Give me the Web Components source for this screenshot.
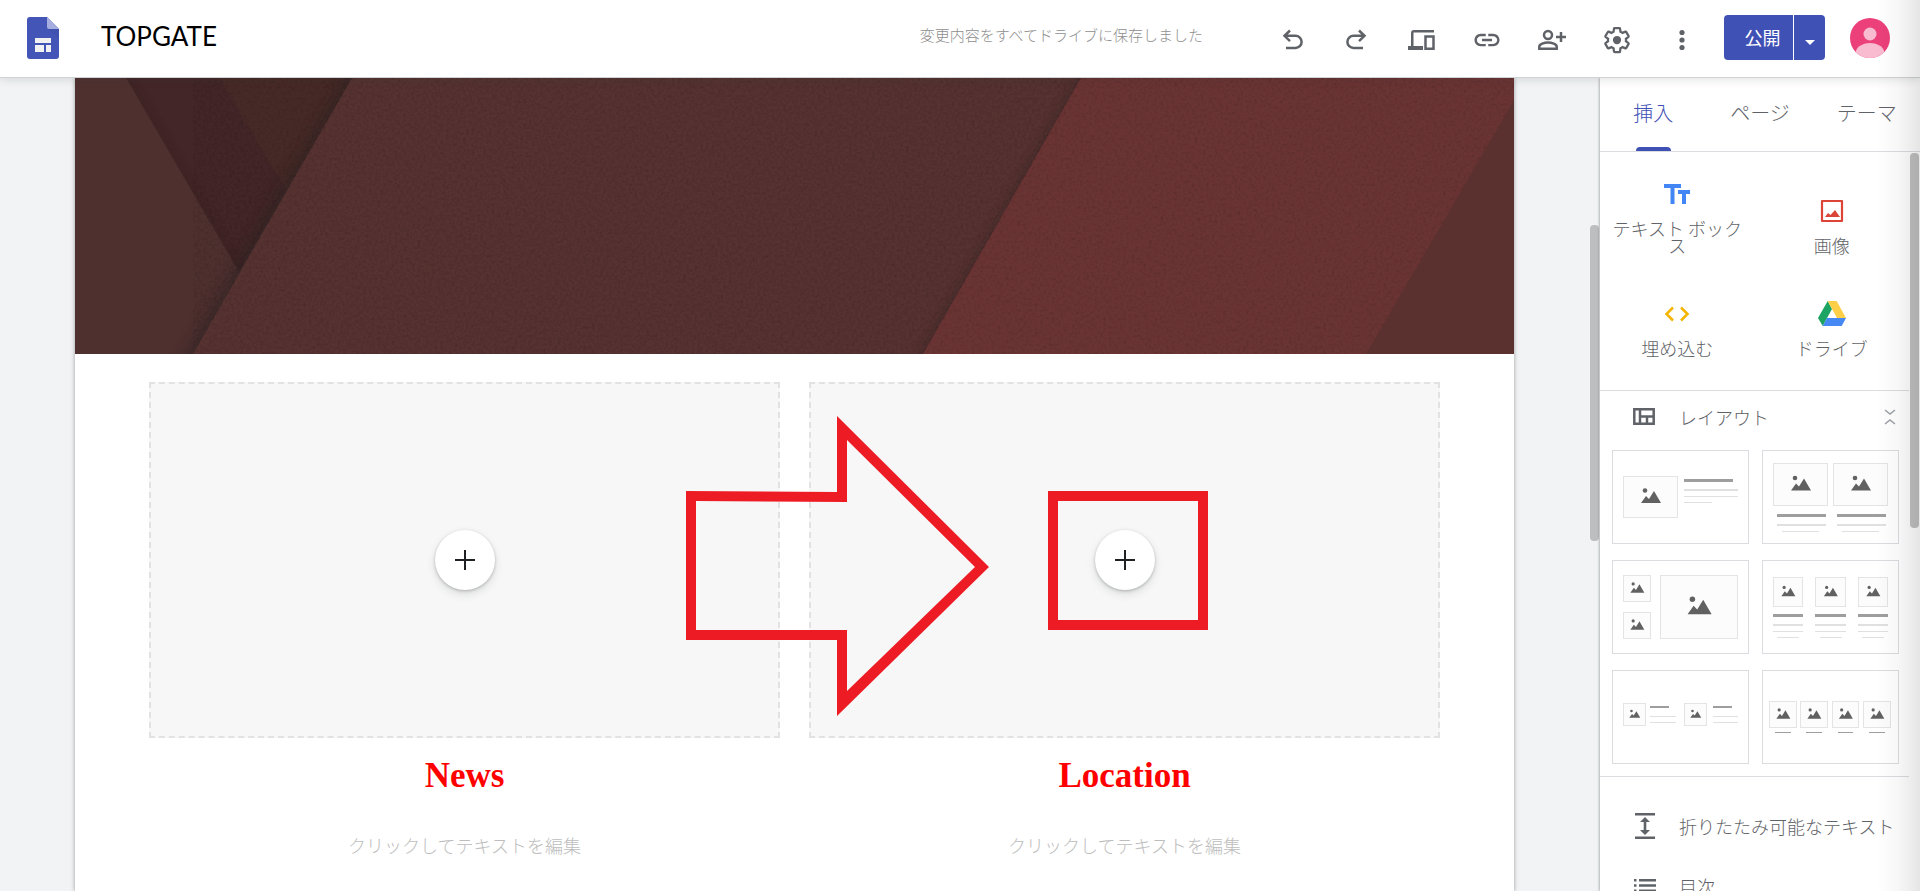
<!DOCTYPE html>
<html lang="ja">
<head>
<meta charset="utf-8">
<title>TOPGATE</title>
<style>
    body {
        margin: 0;
        height: 100vh;
        overflow: hidden;
        font-family: "Noto Sans CJK JP", sans-serif;
        font-weight: 300;
        color: #5f6368;
    }
</style>
</head>
<body>

<template id="site-editor">
    <style>
        :host {
            display: flex;
            flex-direction: column;
            height: 100%;
            position: relative;
        }
        main {
            display: flex;
            flex: 1;
            min-height: 0;
        }
        #edge {
            position: absolute;
            top: 0;
            right: 0;
            bottom: 0;
            width: 44px;
            z-index: 3;
            pointer-events: none;
            background: linear-gradient(to right, rgba(0, 0, 0, 0), rgba(0, 0, 0, .03) 50%, rgba(0, 0, 0, .1));
        }
    </style>
    <slot name="header"></slot>
    <main><slot></slot></main>
    <div id="edge"></div>
</template>

<template id="editor-header">
    <style>
        :host {
            display: block;
            flex: none;
            position: relative;
            z-index: 2;
            background: #fff;
            border-bottom: 1px solid #d0d3d6;
            box-shadow: 0 2px 8px rgba(60, 64, 67, .14);
        }
        header {
            display: flex;
            align-items: center;
            height: 75px;
            padding: 0 30px 2px 27px;
        }
        h1 {
            margin: 0 0 0 42px;
            padding-bottom: 4px;
            font: 400 26px/32px Lato, sans-serif;
            color: #000;
        }
        #status {
            margin-left: auto;
            margin-right: 56px;
            padding-bottom: 6px;
            font-size: 15px;
            line-height: 20px;
            color: #8e8e8e;
        }
        nav {
            display: flex;
            padding-top: 5px;
            margin-right: 10px;
        }
        #publish {
            display: flex;
            gap: 1px;
            margin-right: 25px;
        }
        #publish button {
            height: 45px;
            padding: 0;
            border: 0;
            background: #3f51b5;
            color: #fff;
            font: 400 18px/24px "Noto Sans CJK JP", sans-serif;
        }
        #publish button:first-child {
            width: 69px;
            padding: 0 0 2px 8px;
            border-radius: 4px 0 0 4px;
        }
        #publish button:last-child {
            width: 31px;
            border-radius: 0 4px 4px 0;
        }
        #account {
            padding: 0;
            border: 0;
            background: none;
            display: flex;
        }
    </style>
    <header>
        <svg width="32" height="42" viewBox="0 0 32 42" role="img" aria-label="Sites">
            <path d="M3 0h17l12 12v27a3 3 0 0 1-3 3H3a3 3 0 0 1-3-3V3a3 3 0 0 1 3-3z" fill="#4455b8"/>
            <path d="M20 0l12 12H22a2 2 0 0 1-2-2z" fill="#a5aede"/>
            <path d="M21 12h11v10z" fill="#3b4ba6" opacity=".4"/>
            <path d="M8 21h16v5H8zM8 28h9v7H8zM19 28h5v7h-5z" fill="#f1f1f1"/>
        </svg>
        <h1><slot></slot></h1>
        <span id="status"><slot name="status"></slot></span>
        <nav><slot name="tools"></slot></nav>
        <div id="publish">
            <button type="button"><slot name="publish"></slot></button>
            <button type="button" aria-label="公開オプション">
                <svg width="12" height="6" viewBox="0 0 12 6"><path d="M1 0h10L6 5z" fill="#fff"/></svg>
            </button>
        </div>
        <button id="account" type="button" aria-label="アカウント">
            <svg width="40" height="40" viewBox="0 0 40 40">
                <clipPath id="disc"><circle cx="20" cy="20" r="20"/></clipPath>
                <g clip-path="url(#disc)">
                    <path d="M0 0h40v40H0z" fill="#ec407a"/>
                    <circle cx="20" cy="16" r="6.500" fill="#f8bbd0"/>
                    <path d="M6 33c1-5 8-8 14-8s13 3 14 8v7H6z" fill="#f8bbd0"/>
                </g>
            </svg>
        </button>
    </header>
</template>

<template id="tool-button">
    <style>
        :host { display: block; }
        button {
            display: flex;
            justify-content: center;
            width: 65px;
            padding: 0;
            border: 0;
            background: none;
            color: #5f6368;
        }
    </style>
    <button type="button"><ui-icon></ui-icon></button>
</template>

<template id="editor-canvas">
    <style>
        :host {
            display: flex;
            flex: 1;
            min-width: 0;
            background: #f1f3f4;
        }
        #scroller {
            flex: 1;
            min-width: 0;
            padding: 0 76px 0 75px;
            display: flex;
        }
        article {
            flex: 1;
            min-width: 0;
            background: #fff;
            box-shadow: 0 0 4px rgba(60, 64, 67, .5);
        }
        #columns {
            position: relative;
            display: grid;
            grid-template-columns: 1fr 1fr;
            gap: 29px;
            padding: 28px 74px;
        }
        #track { width: 10px; }
        #thumb {
            height: 316px;
            margin-top: 147px;
            margin-right: 1px;
            border-radius: 4px;
            background: #bdbec0;
        }
    </style>
    <div id="scroller">
        <article>
            <hero-banner></hero-banner>
            <div id="columns"><slot></slot></div>
        </article>
    </div>
    <div id="track"><div id="thumb"></div></div>
</template>

<template id="hero-banner">
    <style>
        :host { display: block; height: 276px; }
        svg { display: block; width: 100%; height: 100%; }
    </style>
    <svg viewBox="0 0 1439 276" preserveAspectRatio="none">
        <defs>
            <filter id="soft" x="-20%" y="-20%" width="140%" height="140%"><feGaussianBlur stdDeviation="7"/></filter>
            <filter id="softer" x="-20%" y="-20%" width="140%" height="140%"><feGaussianBlur stdDeviation="4"/></filter>
            <filter id="paper" x="0" y="0" width="100%" height="100%">
                <feTurbulence type="fractalNoise" baseFrequency=".35" numOctaves="3" seed="4"/>
                <feColorMatrix values="0 0 0 0 0  0 0 0 0 0  0 0 0 0 0  1.5 1.5 0 0 -1.3"/>
            </filter>
            <clipPath id="vee"><path d="M51 0h226L164 194z"/></clipPath>
            <clipPath id="left"><path d="M0 0h277L118 276H0z"/></clipPath>
            <clipPath id="mid"><path d="M277 0h729L848 276H118z"/></clipPath>
        </defs>
        <path d="M0 0h1439v276H0z" fill="#4e302f"/>
        <g clip-path="url(#vee)">
            <path d="M51 0h226L164 194z" fill="#432627"/>
            <path d="M145 0h132l-66 112z" fill="#472a27"/>
            <path d="M51 0l113 194" stroke="#301c1c" stroke-width="6" filter="url(#softer)" opacity=".4"/>
        </g>
        <g clip-path="url(#left)">
            <path d="M290-20L108 296" stroke="#2c2223" stroke-width="14" filter="url(#soft)" opacity=".6"/>
        </g>
        <path d="M277 0h729L848 276H118z" fill="#563231"/>
        <g clip-path="url(#mid)">
            <path d="M1017-20L837 296" stroke="#2f2020" stroke-width="6" filter="url(#softer)" opacity=".5"/>
        </g>
        <path d="M1006 0h433v276H848z" fill="#6b3434"/>
        <path d="M277 0h1162v276H118z" filter="url(#paper)" opacity=".12"/>
        <path d="M1439 22v254h-148z" fill="#5a312f"/>
    </svg>
</template>

<template id="site-column">
    <style>
        :host {
            display: block;
            min-width: 0;
            text-align: center;
        }
        #zone {
            display: grid;
            place-items: center;
            height: 352px;
            border: 2px dashed #e2e2e2;
            background: #f7f7f7;
        }
        button {
            display: grid;
            place-items: center;
            width: 60px;
            height: 60px;
            padding: 0;
            border: 0;
            border-radius: 50%;
            background: #fff;
            color: #202124;
            box-shadow: 0 1px 3px rgba(60, 64, 67, .3), 0 4px 8px rgba(60, 64, 67, .15);
        }
        h2 {
            margin: 18px 0 0;
            font: 700 35px/40px "Liberation Serif", serif;
            color: #f00;
        }
        p {
            margin: 37px 0 0;
            font-size: 18px;
            line-height: 24px;
            color: #bdbdbd;
        }
    </style>
    <div id="zone">
        <button type="button" aria-label="追加">
            <svg width="20" height="20" viewBox="0 0 20 20"><path d="M10 0v20M0 10h20" stroke="currentColor" stroke-width="2"/></svg>
        </button>
    </div>
    <h2><slot></slot></h2>
    <p><slot name="text"></slot></p>
</template>

<template id="guide-marks">
    <style>
        :host {
            position: absolute;
            left: calc(50% - 109px);
            top: 62px;
            width: 523px;
            height: 300px;
            pointer-events: none;
        }
        svg { display: block; }
    </style>
    <svg width="523" height="300" viewBox="0 0 523 300" fill="#ed1c24" fill-rule="evenodd">
        <path d="M0 75L151 76V0L303 151L151 300V224H0zM10 85V214H161V275L289 151L161 24V86z"/>
        <path d="M362 75h160v139H362zM372 85v119h140V85z"/>
    </svg>
</template>

<template id="side-panel">
    <style>
        :host {
            display: flex;
            flex-direction: column;
            width: 320px;
            flex: none;
            background: #fff;
            box-shadow: -1px 0 2px rgba(60, 64, 67, .35);
            position: relative;
        }
        #tabs {
            display: flex;
            flex: none;
            border-bottom: 1px solid #dadce0;
        }
        #body {
            display: flex;
            flex: 1;
            min-height: 0;
            overflow: hidden;
        }
        #content { flex: 1; min-width: 0; }
        #track { width: 11px; }
        #thumb {
            height: 375px;
            margin: 1px 1px 0;
            border-radius: 4px;
            background: #c1c1c1;
        }
    </style>
    <div id="tabs" role="tablist"><slot name="tab"></slot></div>
    <div id="body">
        <div id="content"><slot></slot></div>
        <div id="track"><div id="thumb"></div></div>
    </div>
</template>

<template id="panel-tab">
    <style>
        :host { display: flex; flex: 1; }
        button {
            flex: 1;
            display: flex;
            flex-direction: column;
            align-items: center;
            height: 73px;
            padding: 20px 0 0;
            border: 0;
            background: none;
            font: inherit;
            font-size: 20px;
            line-height: 30px;
            color: #5f6368;
            white-space: nowrap;
        }
        i {
            width: 35px;
            height: 4px;
            margin-top: auto;
            border-radius: 4px 4px 0 0;
        }
        :host([selected]) button { color: #3f51b5; }
        :host([selected]) i { background: #3f51b5; }
    </style>
    <button type="button" role="tab"><slot></slot><i></i></button>
</template>

<template id="insert-group">
    <style>
        :host {
            display: grid;
            grid-template-columns: 1fr 1fr;
            padding: 0 0 32px;
            border-bottom: 1px solid #dadce0;
        }
    </style>
    <slot></slot>
</template>

<template id="insert-item">
    <style>
        :host { display: flex; }
        button {
            flex: 1;
            display: flex;
            flex-direction: column;
            align-items: center;
            justify-content: flex-end;
            height: 103px;
            padding: 0 12px;
            border: 0;
            background: none;
            font: inherit;
            font-size: 18px;
            line-height: 17px;
            color: #5f6368;
        }
        span { margin: 11px 0 1px; }
    </style>
    <button type="button"><ui-icon></ui-icon><span><slot></slot></span></button>
</template>

<template id="layout-group">
    <style>
        :host {
            display: block;
            padding: 11px 10px 12px 12px;
            border-bottom: 1px solid #dadce0;
        }
        button {
            display: flex;
            align-items: center;
            width: 100%;
            padding: 0 0 0 17px;
            border: 0;
            background: none;
            font: inherit;
            font-size: 18px;
            line-height: 30px;
            color: #5f6368;
        }
        span { margin: 0 auto 0 20px; }
        #fold { color: #9aa0a6; }
        #grid {
            display: grid;
            grid-template-columns: 1fr 1fr;
            gap: 16px 13px;
            margin-top: 18px;
        }
    </style>
    <button type="button">
        <ui-icon name="quilt"></ui-icon><span><slot name="title"></slot></span>
        <svg id="fold" width="16" height="18" viewBox="0 0 16 18" fill="none" stroke="currentColor" stroke-width="1.500"><path d="M2 2l5 4 5-4M2 16l5-4 5 4"/></svg>
    </button>
    <div id="grid"><slot></slot></div>
</template>

<template id="layout-card">
    <style>
        :host { display: block; }
        button {
            display: block;
            width: 100%;
            padding: 0;
            border: 1px solid #dadce0;
            background: #fff;
        }
        svg { display: block; width: 100%; height: 92px; }
        .frame { fill: #fcfcfc; stroke: #e4e4e4; }
        .bar { fill: #9e9e9e; }
        .line { fill: #e0e0e0; }
        .peak { fill: #616161; }
    </style>
    <button type="button"><svg viewBox="1 1 135 92"></svg></button>
</template>

<template id="panel-row">
    <style>
        :host { display: block; }
        button {
            display: flex;
            align-items: center;
            gap: 20px;
            width: 100%;
            height: 60px;
            padding: 0 0 0 29px;
            border: 0;
            background: none;
            font: inherit;
            font-size: 18px;
            line-height: 24px;
            color: #5f6368;
            white-space: nowrap;
        }
    </style>
    <button type="button"><ui-icon></ui-icon><span><slot></slot></span></button>
</template>

<template id="row-group">
    <style>
        :host { display: block; padding-top: 19px; }
    </style>
    <slot></slot>
</template>

<site-editor>
    <editor-header slot="header">
        TOPGATE
        <span slot="status">変更内容をすべてドライブに保存しました</span>
        <tool-button slot="tools" icon="undo" label="元に戻す"></tool-button>
        <tool-button slot="tools" icon="redo" label="やり直す"></tool-button>
        <tool-button slot="tools" icon="devices" label="プレビュー"></tool-button>
        <tool-button slot="tools" icon="link" label="リンクをコピー"></tool-button>
        <tool-button slot="tools" icon="share" label="他のユーザーと共有"></tool-button>
        <tool-button slot="tools" icon="gear" label="設定"></tool-button>
        <tool-button slot="tools" icon="more" label="その他"></tool-button>
        <span slot="publish">公開</span>
    </editor-header>

    <editor-canvas>
        <site-column>News<span slot="text">クリックしてテキストを編集</span></site-column>
        <site-column>Location<span slot="text">クリックしてテキストを編集</span></site-column>
        <guide-marks></guide-marks>
    </editor-canvas>

    <side-panel>
        <panel-tab slot="tab" selected>挿入</panel-tab>
        <panel-tab slot="tab">ページ</panel-tab>
        <panel-tab slot="tab">テーマ</panel-tab>
        <insert-group>
            <insert-item icon="text">テキスト ボックス</insert-item>
            <insert-item icon="image">画像</insert-item>
            <insert-item icon="code">埋め込む</insert-item>
            <insert-item icon="drive">ドライブ</insert-item>
        </insert-group>
        <layout-group>
            <span slot="title">レイアウト</span>
            <layout-card kind="side"></layout-card>
            <layout-card kind="pair"></layout-card>
            <layout-card kind="mosaic"></layout-card>
            <layout-card kind="triple"></layout-card>
            <layout-card kind="inline"></layout-card>
            <layout-card kind="quad"></layout-card>
        </layout-group>
        <row-group>
            <panel-row icon="collapse">折りたたみ可能なテキスト</panel-row>
            <panel-row icon="list">目次</panel-row>
        </row-group>
    </side-panel>
</site-editor>

<script>
    // all icons are drawn on a 30 x 30 grid
    const ICONS = {
        undo: '<path d="M13 5.500L7.500 10.800l5.500 5.400M8 10.800h10.500a6 6 0 0 1 0 12.200H9" fill="none" stroke="currentColor" stroke-width="2.500"/>',
        redo: '<path d="M17 5.500l5.500 5.300-5.500 5.400M22 10.800H11.500a6 6 0 0 0 0 12.200H21" fill="none" stroke="currentColor" stroke-width="2.500"/>',
        devices: '<path d="M4 8a3 3 0 0 1 3-3h20v2.500H6.500V21H16v4H1v-4h3z"/><path d="M18.500 11.500h8v12.300h-8z" fill="none" stroke="currentColor" stroke-width="2.500"/>',
        link: '<path transform="scale(1.250)" d="M3.900 12c0-1.710 1.390-3.100 3.100-3.100h4V7H7c-2.760 0-5 2.240-5 5s2.240 5 5 5h4v-1.900H7c-1.710 0-3.100-1.390-3.100-3.100zM8 13h8v-2H8v2zm9-6h-4v1.900h4c1.710 0 3.100 1.390 3.100 3.100s-1.390 3.100-3.100 3.100h-4V17h4c2.760 0 5-2.240 5-5s-2.240-5-5-5z"/>',
        share: '<g fill="none" stroke="currentColor" stroke-width="2.500"><circle cx="11" cy="10" r="4"/><path d="M2.300 23.800v-2.300c0-2.500 5-4 8.700-4s8.700 1.500 8.700 4v2.300zM24 7v10M19 12h10"/></g>',
        gear: '<g transform="scale(1.250)"><circle cx="12" cy="12" r="3.300"/><path fill="none" stroke="currentColor" stroke-width="1.800" d="M19.140 12.940c.04-.3.06-.61.06-.94 0-.32-.02-.64-.07-.94l2.030-1.580c.18-.14.23-.41.12-.61l-1.920-3.320c-.12-.22-.37-.29-.59-.22l-2.390.96c-.5-.38-1.030-.7-1.620-.94l-.36-2.540c-.04-.24-.24-.41-.48-.41h-3.840c-.24 0-.43.17-.47.41l-.36 2.540c-.59.24-1.130.57-1.620.94l-2.390-.96c-.22-.08-.47 0-.59.22L2.740 8.870c-.12.21-.08.47.12.61l2.030 1.580c-.05.3-.09.63-.09.94s.02.64.07.94l-2.030 1.580c-.18.14-.23.41-.12.61l1.920 3.320c.12.22.37.29.59.22l2.390-.96c.5.38 1.030.7 1.620.94l.36 2.540c.05.24.24.41.48.41h3.840c.24 0 .44-.17.47-.41l.36-2.540c.59-.24 1.130-.56 1.620-.94l2.390.96c.22.08.47 0 .59-.22l1.920-3.320c.12-.22.07-.47-.12-.61z"/></g>',
        more: '<circle cx="15" cy="7.500" r="2.600"/><circle cx="15" cy="15" r="2.600"/><circle cx="15" cy="22.500" r="2.600"/>',
        text: '<path d="M2 5h17v4h-6.500v16h-4V9H2zM16 11h12v4h-4v10h-4V15h-4z" fill="#4285f4"/>',
        image: '<path d="M5 5h20v20H5z" fill="none" stroke="#db4437" stroke-width="2.200" stroke-linejoin="round"/><path d="M8 21l3-4 2.500 2 4.500-5 5 7z" fill="#db4437"/>',
        code: '<path d="M11 8.500L4.500 15l6.500 6.500M19 8.500l6.500 6.500-6.500 6.500" fill="none" stroke="#f4b400" stroke-width="2.500"/>',
        drive: '<path d="M10.700 2l4.300 8-9.300 17L1 19z" fill="#1da462"/><path d="M10.700 2h9L29 19h-9z" fill="#ffcf48"/><path d="M10 19h19l-4.300 8h-19z" fill="#4688f4"/>',
        quilt: '<path d="M5.300 7.300h19.400v14.400H5.300zM11 7v15M11 14.500h14M18 14.500V22" fill="none" stroke="currentColor" stroke-width="2.500"/>',
        collapse: '<path d="M6 2h20v2.500H6zM6 25.500h20V28H6zM16 6l5 5h-3.700v8H21l-5 5-5-5h3.700v-8H11z"/>',
        list: '<path d="M5 8h2.500v2.500H5zM10 8h17v2.500H10zM5 13.200h2.500v2.500H5zM10 13.200h17v2.500H10zM5 18.400h2.500v2.500H5zM10 18.400h17v2.500H10z"/>'
    }

    // [x, y, w, h] boxes on the 137 x 94 card; a frame carries the width of its picture glyph
    const LAYOUTS = {
        side: {
            frame: [[11, 26, 55, 42, 20]],
            bar: [[72, 29, 49, 3]],
            line: [[72, 39, 54, 2], [72, 46, 54, 1], [72, 52, 28, 1]]
        },
        pair: {
            frame: [[11, 13, 55, 43, 20], [71, 13, 55, 43, 20]],
            bar: [[15, 64, 49, 3], [75, 64, 49, 3]],
            line: [[15, 74, 49, 2], [75, 74, 49, 2], [20, 81, 37, 1], [80, 81, 37, 1]]
        },
        mosaic: {
            frame: [[11, 15, 28, 27, 14], [11, 52, 28, 27, 14], [48, 15, 78, 64, 24]],
            bar: [],
            line: []
        },
        triple: {
            frame: [[11, 17, 30, 30, 14], [53, 17, 31, 30, 14], [96, 17, 30, 30, 14]],
            bar: [[11, 54, 30, 3], [53, 54, 31, 3], [96, 54, 30, 3]],
            line: [[11, 64, 30, 2], [53, 64, 31, 2], [96, 64, 30, 2], [11, 71, 30, 1], [53, 71, 31, 1], [96, 71, 30, 1], [15, 77, 22, 1], [58, 77, 22, 1], [100, 77, 22, 1]]
        },
        inline: {
            frame: [[11, 33, 23, 23, 11], [72, 33, 23, 23, 11]],
            bar: [[38, 36, 19, 2], [101, 36, 19, 2]],
            line: [[38, 46, 26, 1], [101, 46, 25, 1], [38, 52, 26, 1], [101, 52, 25, 1]]
        },
        quad: {
            frame: [[7, 31, 28, 27, 14], [38, 31, 28, 27, 14], [70, 31, 27, 27, 14], [101, 31, 28, 27, 14]],
            bar: [[13, 62, 16, 1], [44, 62, 16, 1], [76, 62, 15, 1], [107, 62, 16, 1]],
            line: []
        }
    }

    class Base extends HTMLElement {
        constructor() {
            super()
            const template = document.querySelector('template#' + this.localName)
            this.attachShadow({ mode: 'open' }).appendChild(template.content.cloneNode(true))
        }
    }

    class UiIcon extends HTMLElement {
        static get observedAttributes() {
            return ['name']
        }

        constructor() {
            super()
            this.attachShadow({ mode: 'open' })
        }

        attributeChangedCallback(name, oldValue, newValue) {
            this.shadowRoot.innerHTML = `
                <style>:host { display: block; flex: none; } svg { display: block; }</style>
                <svg width="30" height="30" viewBox="0 0 30 30" fill="currentColor" aria-hidden="true">${ICONS[newValue] || ''}</svg>`
        }
    }

    class IconHolder extends Base {
        connectedCallback() {
            this.shadowRoot.querySelector('ui-icon').setAttribute('name', this.getAttribute('icon'))
            if (this.hasAttribute('label')) {
                this.shadowRoot.querySelector('button').setAttribute('aria-label', this.getAttribute('label'))
            }
        }
    }

    class PanelTab extends Base {
        connectedCallback() {
            this.shadowRoot.querySelector('button').setAttribute('aria-selected', this.hasAttribute('selected'))
        }
    }

    class LayoutCard extends Base {
        connectedCallback() {
            const kind = this.getAttribute('kind')
            const layout = LAYOUTS[kind]
            const rects = (cls, list) => list.map(([x, y, w, h]) => `<rect class="${cls}" x="${x}" y="${y}" width="${w}" height="${h}"/>`).join('')
            const frames = layout.frame.map(([x, y, w, h, size]) => {
                const k = size / 20
                const left = x + w / 2 - size / 2 + k / 2
                const top = y + h / 2 - 9 * k
                return `<rect class="frame" x="${x + .5}" y="${y + .5}" width="${w - 1}" height="${h - 1}"/>
                    <g class="peak" transform="translate(${left} ${top}) scale(${k})">
                        <circle cx="4" cy="2.500" r="2.300"/><path d="M0 15l5-7 3 3 5-8 7 12z"/>
                    </g>`
            }).join('')
            this.shadowRoot.querySelector('svg').innerHTML = frames + rects('bar', layout.bar) + rects('line', layout.line)
            this.shadowRoot.querySelector('button').setAttribute('aria-label', kind)
        }
    }

    customElements.define('ui-icon', UiIcon)
    customElements.define('tool-button', class extends IconHolder {})
    customElements.define('insert-item', class extends IconHolder {})
    customElements.define('panel-row', class extends IconHolder {})
    customElements.define('panel-tab', PanelTab)
    customElements.define('layout-card', LayoutCard)
    for (const name of ['site-editor', 'editor-header', 'editor-canvas', 'hero-banner', 'site-column', 'guide-marks', 'side-panel', 'insert-group', 'layout-group', 'row-group']) {
        customElements.define(name, class extends Base {})
    }
</script>
</body>
</html>
